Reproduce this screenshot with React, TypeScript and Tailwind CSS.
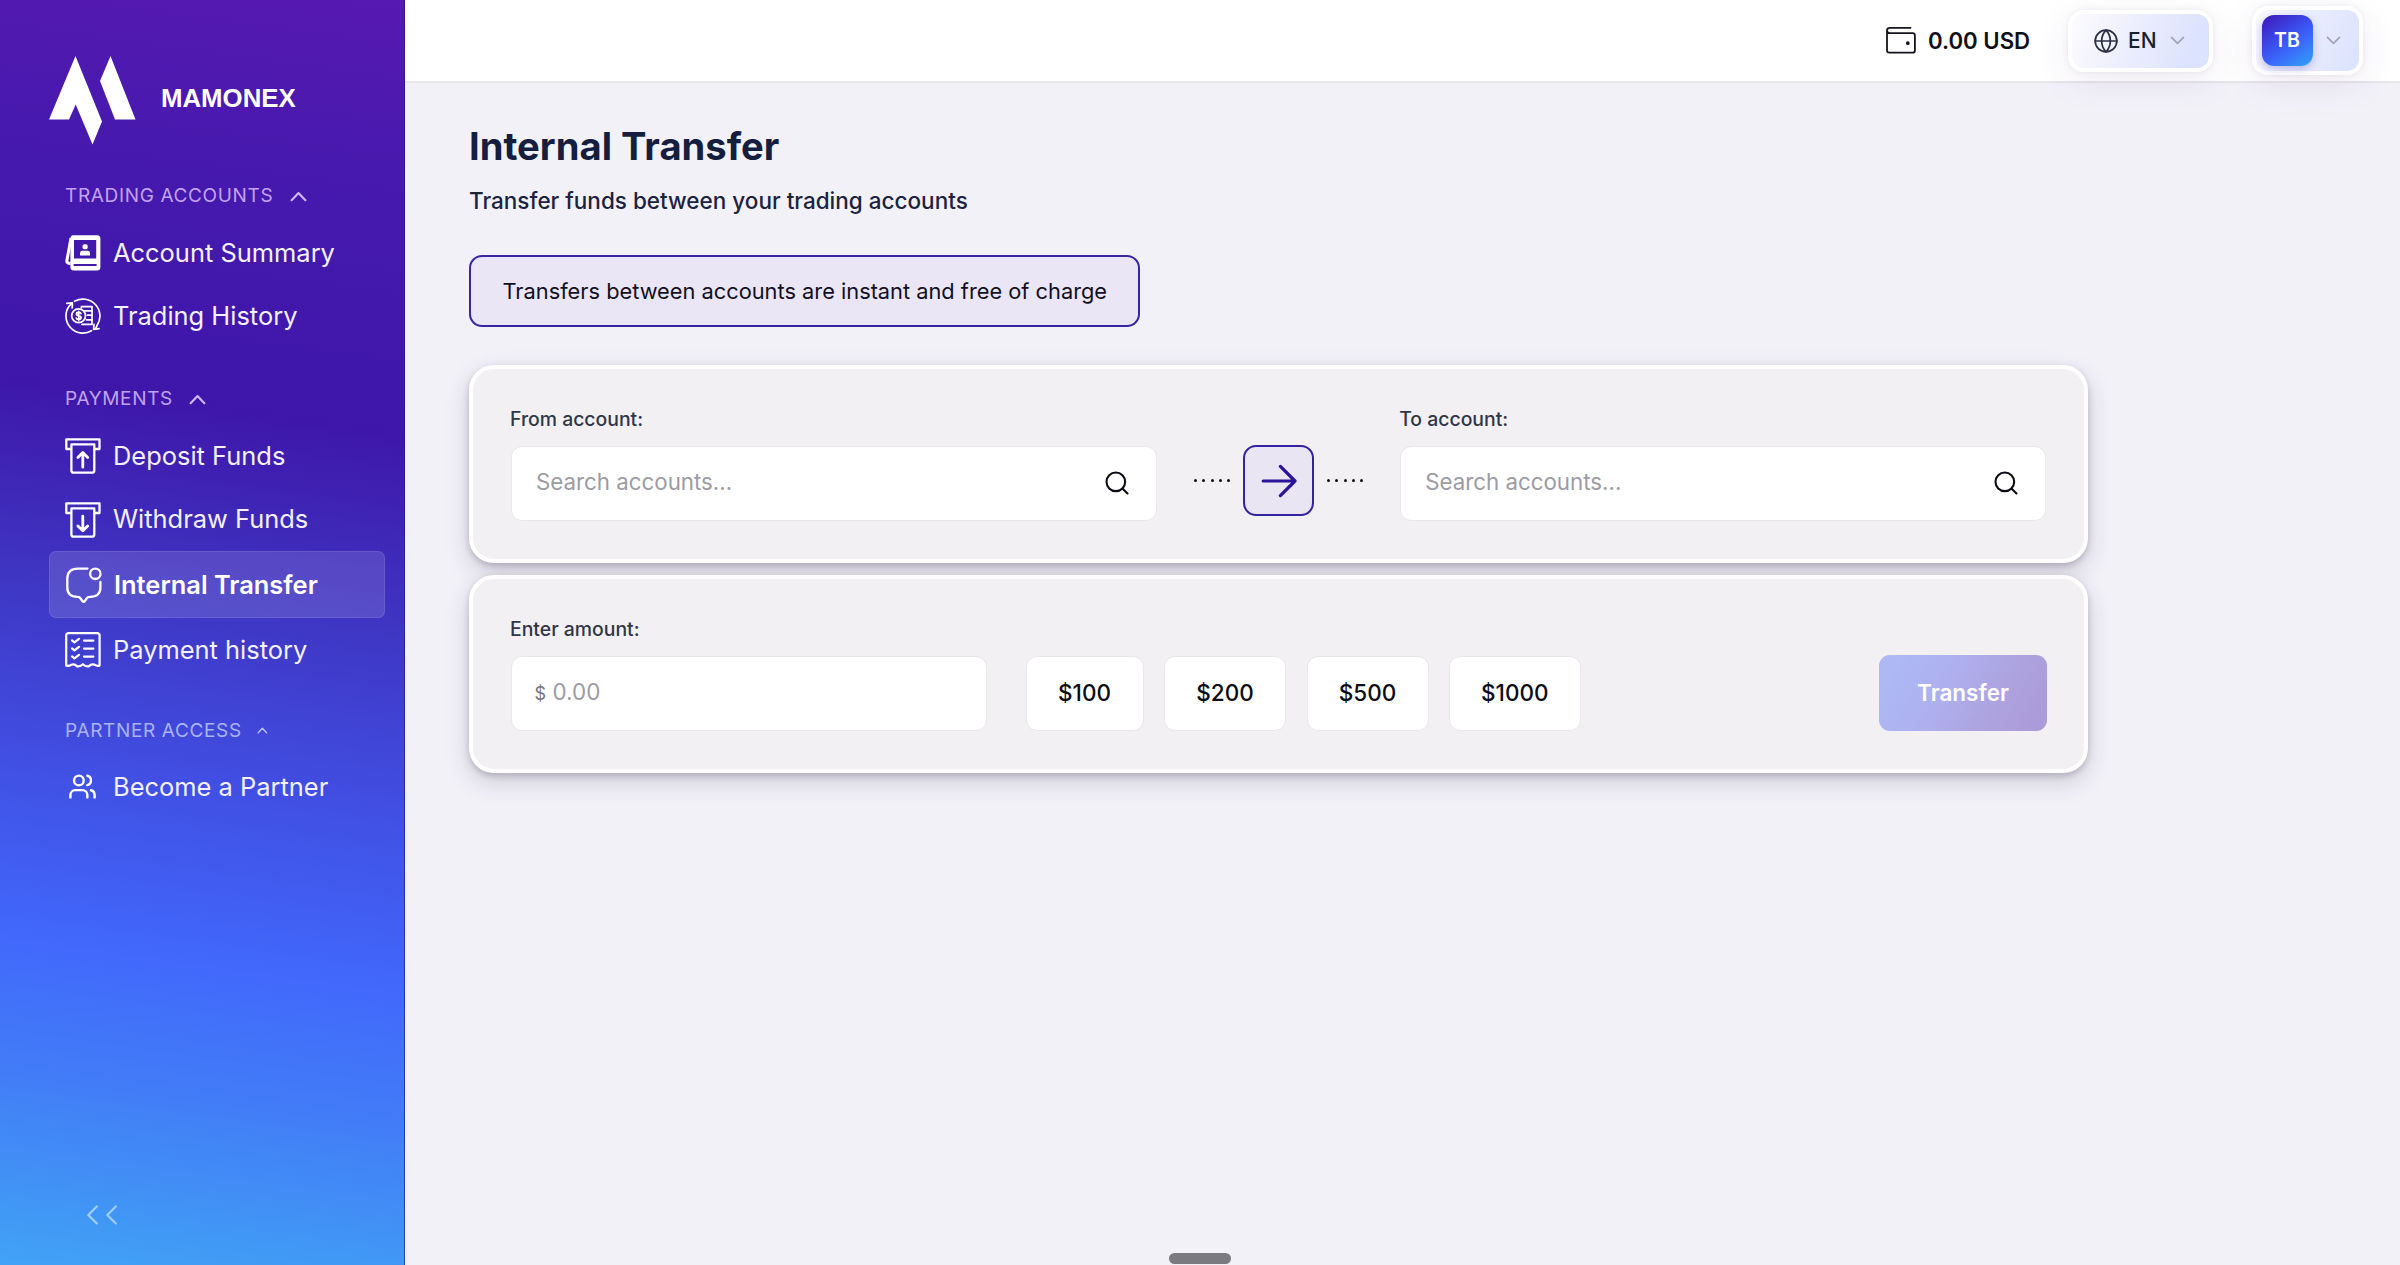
import React from 'react';
import { Globe, Search, Users } from 'lucide-react';

type IconProps = { className?: string };

const LogoMark = () => (
  <svg width="88" height="90" viewBox="0 0 88 90" fill="#fff">
    <path d="M26.5 0 L53 65.5 L43.5 88.5 L26.7 48.5 L20 63.5 H0 Z" />
    <path d="M61.5 0 L86.5 63.5 H66 L51 25 Z" />
  </svg>
);

const AccountIcon = () => (
  <svg width="36" height="36" viewBox="0 0 36 36" fill="none">
    <path d="M6 3 L1.8 26 Q1.6 28.4 5.5 28.6" stroke="#fff" strokeWidth="3" />
    <path
      fillRule="evenodd"
      fill="#fff"
      d="M8 0.3 H32 Q35.4 0.3 35.4 3.7 V32 Q35.4 35.6 32 35.6 H9 Q5.4 35.6 5.4 32 V4 Q5.4 0.3 8 0.3 Z M9 5 V23.4 H31.2 V5 Z M8.6 29 V30.9 H31.6 V29 Z"
    />
    <rect x="17.5" y="9.2" width="5.2" height="5" rx="1.8" fill="#fff" />
    <path d="M15 20.4 V18.2 Q15 15.8 17.4 15.8 H22.8 Q25 15.8 25 18.2 V20.4 Z" fill="#fff" />
  </svg>
);

const HistoryIcon = () => (
  <svg width="36" height="36" viewBox="0 0 36 36" fill="none" stroke="#fff" strokeWidth="1.7" strokeLinecap="round" strokeLinejoin="round">
    <path d="M9.5 3.3 A17 17 0 0 1 32 27.6 L30.6 30.6" />
    <path d="M26.5 32.8 A17 17 0 0 1 4.6 7.6 L6.6 5.6" />
    <path d="M1.8 5.4 L7.4 4.8 L7.2 10" />
    <path d="M34 30.6 L28.6 31.4 L29 26.4" />
    <path d="M16.4 10 V8.6 H27 V26.4 H17" />
    <path d="M19.6 12.8 H27 M22.4 17.2 H27 M21.4 21.8 H27" />
    <circle cx="13.6" cy="17.8" r="6.9" />
    <path d="M16 15.6 Q15.6 14.4 13.7 14.4 Q11.4 14.4 11.4 16 Q11.4 17.5 13.7 17.8 Q16.1 18.1 16.1 19.8 Q16.1 21.4 13.7 21.4 Q11.6 21.4 11.2 20 M13.7 13.4 V22.4" />
  </svg>
);

const SlotIcon = ({ arrow }: { arrow: string }) => (
  <svg width="36" height="36" viewBox="0 0 36 36" fill="none" stroke="#fff" strokeWidth="2.3" strokeLinecap="round" strokeLinejoin="round">
    <path d="M6 11 H1.3 V1.3 H34.5 V11 H29.6" />
    <path d="M6.4 6.4 H29.3 V32.4 Q29.3 34.7 27 34.7 H8.7 Q6.4 34.7 6.4 32.4 Z" />
    <path d={arrow} strokeWidth="2.8" />
  </svg>
);

const DepositIcon = () => <SlotIcon arrow="M17.8 29.2 V14.6 M12.9 19.5 L17.8 14.6 L22.7 19.5" />;
const WithdrawIcon = () => <SlotIcon arrow="M17.8 14.2 V28.8 M12.9 24 L17.8 28.8 L22.7 24" />;

const TransferIcon = () => (
  <svg width="36" height="36" viewBox="0 0 36 36" fill="none" stroke="#fff" strokeWidth="2.3" strokeLinecap="round" strokeLinejoin="round">
    <path d="M21.5 1.6 H12 Q1.3 1.6 1.3 12 V20.5 Q1.3 29.8 11.5 29.8 Q13.8 29.8 14.6 31.5 L16.4 34.1 Q17.6 35.4 18.8 34.1 L20.6 31.5 Q21.4 29.8 24 29.8 Q34.4 29.8 34.4 20.5 V15" />
    <circle cx="29.3" cy="6.8" r="5.2" />
  </svg>
);

const PaymentIcon = () => (
  <svg width="36" height="36" viewBox="0 0 36 36" fill="none" stroke="#fff" strokeWidth="2.2" strokeLinecap="round" strokeLinejoin="round">
    <path d="M1.2 33.5 V3.6 Q1.2 1.2 3.6 1.2 H32 Q34.6 1.2 34.6 3.6 V33.5 Q32.4 34.6 29.4 32.6 Q26.2 31.6 23.6 34.4 Q20.6 34.8 17.9 32.2 Q15 34.8 12.2 34.4 Q9.4 31.6 6.4 32.8 Q3.4 34.6 1.2 33.5 Z" />
    <path d="M7 8.4 L9.4 10.4 L14 6.8 M7 16.4 L9.4 18.4 L14 14.8 M7 24.4 L9.4 26.4 L14 22.8" />
    <path d="M19 8.6 H28.4 M19 16.6 H28.4 M19 24.6 H28.4" />
  </svg>
);

const PartnerIcon = () => (
  <span className="flex w-9 justify-center pr-px">
    <Users size={29} strokeWidth={2} color="#fff" />
  </span>
);

const WalletIcon = () => (
  <svg width="30" height="28" viewBox="0 0 30 28" fill="none" stroke="#15151d" strokeWidth="1.8" strokeLinecap="round" strokeLinejoin="round">
    <path d="M24.6 1.8 H3.8 Q1 1.8 1 4.2 Q1 7.2 3.8 7.2 H26.6 Q28.9 7.2 28.9 9.5 V24.4 Q28.9 26.7 26.6 26.7 H3.4 Q1 26.7 1 24.4 V4.2" />
    <circle cx="21.8" cy="17.2" r="1" fill="#15151d" />
  </svg>
);

const ChevronUp = () => (
  <svg width="17" height="11" viewBox="0 0 17 11" fill="none" stroke="#d3b9f6" strokeWidth="2.1" strokeLinecap="round" strokeLinejoin="round">
    <path d="M1.6 9.2 L8.5 2 L15.4 9.2" />
  </svg>
);

const ChevronUpSmall = () => (
  <svg width="11" height="7" viewBox="0 0 11 7" fill="none" stroke="#b9c2f8" strokeWidth="1.4" strokeLinecap="round" strokeLinejoin="round">
    <path d="M1.2 5.8 L5.4 1.3 L9.6 5.8" />
  </svg>
);

const ChevronDown = ({ className }: IconProps) => (
  <svg className={className} width="15" height="9" viewBox="0 0 15 9" fill="none" stroke="#a3a4b3" strokeWidth="1.7" strokeLinecap="round" strokeLinejoin="round">
    <path d="M1.5 1.4 L7.5 7.4 L13.5 1.4" />
  </svg>
);

const CollapseIcon = () => (
  <svg width="30" height="20" viewBox="0 0 30 20" fill="none" stroke="#a3cffc" strokeWidth="2.1" strokeLinecap="round" strokeLinejoin="round">
    <path d="M9.8 1.4 L1.3 10 L9.8 18.4 M28.8 1.4 L20.3 10 L28.8 18.4" />
  </svg>
);

const ArrowIcon = () => (
  <svg width="36" height="36" viewBox="0 0 36 36" fill="none" stroke="#2a1499" strokeWidth="3.2" strokeLinecap="round" strokeLinejoin="round">
    <path d="M2.2 18 H34 M19.4 3.4 L34 18 L19.4 32.6" />
  </svg>
);

type Item = { label: string; icon: () => React.ReactElement; active?: boolean };
type Group = { title: string; chevron: () => React.ReactElement; heading: string; items: Item[] };

const groups: Group[] = [
  {
    title: 'TRADING ACCOUNTS',
    chevron: ChevronUp,
    heading: 'h-[52px] gap-[16.5px] pt-[2px] text-[#c3a2f0]',
    items: [
      { label: 'Account Summary', icon: AccountIcon },
      { label: 'Trading History', icon: HistoryIcon },
    ],
  },
  {
    title: 'PAYMENTS',
    chevron: ChevronUp,
    heading: 'mt-[25px] h-[52px] gap-[16px] pt-px text-[#c0a4ef]',
    items: [
      { label: 'Deposit Funds', icon: DepositIcon },
      { label: 'Withdraw Funds', icon: WithdrawIcon },
      { label: 'Internal Transfer', icon: TransferIcon, active: true },
      { label: 'Payment history', icon: PaymentIcon },
    ],
  },
  {
    title: 'PARTNER ACCESS',
    chevron: ChevronUpSmall,
    heading: 'mt-[24.5px] h-[49px] gap-[15px] pt-px text-[#aab4f6]',
    items: [{ label: 'Become a Partner', icon: PartnerIcon }],
  },
];

const Sidebar = () => (
  <aside className="flex h-full w-[405px] shrink-0 flex-col border-r border-[#1f1590]/70 bg-[linear-gradient(188deg,#5619b1_0%,#4519ad_16%,#3e17aa_33%,#3f36c4_48%,#4152e6_63%,#4168fb_75%,#427cf7_85%,#4193f5_94%,#41a3f6_100%)] pl-[49px] pr-[19px]">
    <div className="mt-[56px] flex items-center">
      <LogoMark />
      <span className="-mt-[6px] ml-[24px] font-['Liberation_Sans',sans-serif] text-[25.8px] font-bold leading-8 text-white">MAMONEX</span>
    </div>
    <nav className="mt-[23px]">
      {groups.map((g) => (
        <section key={g.title}>
          <h2 className={`flex items-center pl-[16px] text-[19px] tracking-[0.65px] ${g.heading}`}>
            {g.title}
            <g.chevron />
          </h2>
          <ul>
            {g.items.map((it) => (
              <li
                key={it.label}
                className={
                  it.active
                    ? 'flex h-[67px] items-center rounded-[7px] border border-white/10 bg-white/[0.13] pl-[16px] text-[25.45px] font-semibold text-white'
                    : 'flex h-[63.3px] items-center pl-[16px] text-[25.45px] text-[#f4f0ff]'
                }
              >
                <it.icon />
                <span className="ml-[12px] whitespace-nowrap">{it.label}</span>
              </li>
            ))}
          </ul>
        </section>
      ))}
    </nav>
    <div className="mb-[40px] ml-[38px] mt-auto">
      <CollapseIcon />
    </div>
  </aside>
);

const pill = 'flex items-center rounded-[16px] border-4 border-white shadow-[0_10px_36px_rgba(90,40,110,0.09),0_0_6px_rgba(90,80,130,0.10)]';

const TopBar = () => (
  <header className="flex h-[83px] shrink-0 items-center justify-end border-b-2 border-[#e6e5ea] bg-white pr-[37.5px]">
    <div className="flex w-[182px] items-center gap-[12px] text-[22.2px] font-semibold text-[#0f0f18]">
      <WalletIcon />
      <span className="whitespace-nowrap">0.00 USD</span>
    </div>
    <div className={`${pill} mr-[39px] h-[62px] w-[144.5px] bg-[linear-gradient(110deg,#fbfafe_5%,#eeeffd_40%,#dce3fe_85%)] pl-[21px]`}>
      <Globe size={26} strokeWidth={1.6} color="#2c3144" />
      <span className="ml-[9px] text-[21px] font-medium text-[#1b1e2e]">EN</span>
      <ChevronDown className="ml-[13px]" />
    </div>
    <div className={`${pill} h-[69px] w-[111px] bg-[linear-gradient(110deg,#f8f8fe_5%,#e6eafe_60%,#dce3fe_95%)] pl-[6px]`}>
      <div className="flex h-[51px] w-[51px] items-center justify-center rounded-[12px] bg-[linear-gradient(145deg,#3d16b4_0%,#3b50f0_45%,#3a6cfa_65%,#30a4f5_100%)] text-[19.6px] font-semibold text-white shadow-[0_3px_8px_rgba(60,60,160,0.3)]">
        TB
      </div>
      <ChevronDown className="ml-[13.5px]" />
    </div>
  </header>
);

const card =
  'w-[1619px] h-[197.5px] rounded-[25px] border-4 border-white bg-[#f2f0f3] px-[38px] pt-[36px] shadow-[0_9px_24px_rgba(40,30,60,0.18),0_3px_6px_rgba(40,30,60,0.20)]';
const field = 'flex items-center rounded-[11px] border border-[#e9e7ec] bg-white';
const fieldLabel = '-ml-px text-[19.4px] font-medium leading-7 text-[#303648]';

const AccountField = ({ label }: { label: string }) => (
  <div className="w-[646px]">
    <div className={fieldLabel}>{label}</div>
    <div className={`${field} mt-[13px] h-[74.5px] justify-between pl-[24px] pr-[25px] text-[22.3px] text-[#9d9ba3]`}>
      <span className="-mt-[3px]">Search accounts...</span>
      <Search size={28} strokeWidth={1.8} color="#0c0c14" />
    </div>
  </div>
);

const Dots = () => (
  <span className="flex w-[36px] justify-between">
    {[0, 1, 2, 3, 4].map((i) => (
      <i key={i} className="size-[3px] rounded-full bg-[#0c0c14]" />
    ))}
  </span>
);

const presets = [
  { label: '$100', width: 'w-[118px]' },
  { label: '$200', width: 'w-[122px]' },
  { label: '$500', width: 'w-[122px]' },
  { label: '$1000', width: 'w-[131.5px]' },
];

const Content = () => (
  <main className="flex flex-1 flex-col pl-[64px] pt-[39px]">
    <h1 className="text-[38.2px] font-bold leading-[48px] text-[#161e3f]">Internal Transfer</h1>
    <p className="mt-[15px] text-[22.5px] font-medium leading-8 text-[#1c2340]">Transfer funds between your trading accounts</p>
    <div className="mt-[38px] flex h-[72px] w-[671px] items-center rounded-[13px] border-2 border-[#3626a0] bg-[#eae6f5] pl-[31.5px] text-[21.8px] text-[#12101f]">
      Transfers between accounts are instant and free of charge
    </div>

    <section className={`${card} mt-[38px]`}>
      <div className="flex">
        <AccountField label="From account:" />
        <div className="mt-[40px] flex h-[71px] w-[243.5px] items-center justify-center gap-[13px]">
          <Dots />
          <span className="flex h-[71px] w-[71px] items-center justify-center rounded-[13px] border-2 border-[#3323a0] bg-[#e9e5f3]">
            <ArrowIcon />
          </span>
          <Dots />
        </div>
        <AccountField label="To account:" />
      </div>
    </section>

    <section className={`${card} mt-[12.5px]`}>
      <div className={fieldLabel}>Enter amount:</div>
      <div className="mt-[13px] flex h-[74.5px] items-stretch">
        <div className={`${field} w-[475.5px] pl-[22.5px]`}>
          <span className="text-[18px] text-[#75737c]">$</span>
          <span className="-mt-[2px] ml-[6.5px] text-[22.4px] text-[#9d9ba3]">0.00</span>
        </div>
        <div className="ml-[39px] flex gap-[20.5px]">
          {presets.map((p) => (
            <button key={p.label} className={`${field} ${p.width} justify-center text-[22.5px] font-medium text-[#0d0d18]`}>
              {p.label}
            </button>
          ))}
        </div>
        <button className="-mr-px -mt-px ml-auto h-[76px] w-[168px] rounded-[11px] bg-[linear-gradient(118deg,#adb8f4_10%,#aeb0ee_40%,#ada4e0_65%,#ab9bd8_95%)] text-[22.5px] font-semibold text-white">
          Transfer
        </button>
      </div>
    </section>
  </main>
);

export default function App() {
  return (
    <div className="relative flex h-[1265px] w-[2400px] overflow-hidden bg-[#f2f1f8] font-['Inter',sans-serif]">
      <Sidebar />
      <div className="flex min-w-0 flex-1 flex-col">
        <TopBar />
        <Content />
      </div>
      <div className="absolute bottom-[1px] left-[1169px] h-[11px] w-[62px] rounded-full bg-[#7b7a81]" />
    </div>
  );
}
